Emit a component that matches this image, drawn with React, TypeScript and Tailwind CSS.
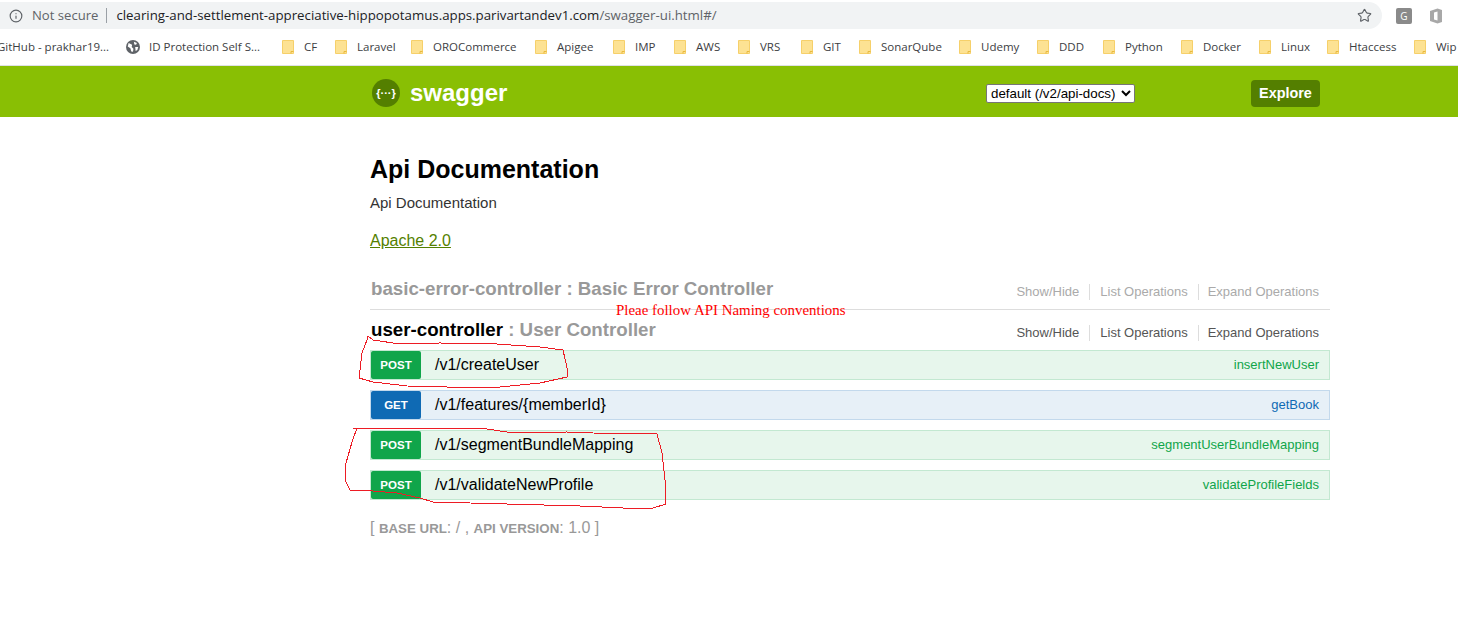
import { Info, Star } from "lucide-react";

const ui = "font-['Open_Sans','Noto_Sans',sans-serif]";

const bookmarks = [
  { label: "CF", w: "w-[53px]" },
  { label: "Laravel", w: "w-[76px]" },
  { label: "OROCommerce", w: "w-[124px]" },
  { label: "Apigee", w: "w-[78px]" },
  { label: "IMP", w: "w-[61px]" },
  { label: "AWS", w: "w-[64px]" },
  { label: "VRS", w: "w-[63px]" },
  { label: "GIT", w: "w-[58px]" },
  { label: "SonarQube", w: "w-[100px]" },
  { label: "Udemy", w: "w-[78px]" },
  { label: "DDD", w: "w-[66px]" },
  { label: "Python", w: "w-[78px]" },
  { label: "Docker", w: "w-[78px]" },
  { label: "Linux", w: "w-[68px]" },
  { label: "Htaccess", w: "w-[87px]" },
  { label: "Wip", w: "w-[60px]" },
];

const Folder = () => (
  <svg width="12" height="14" viewBox="0 0 12 14" className="shrink-0">
    <path d="M0.5 0.5H11.5V13.5H0.5Z" fill="#fde293" stroke="#f6d06a" />
    <path d="M9 13.5V11.5H11.5" fill="none" stroke="#e8b93e" />
  </svg>
);

const Globe = () => (
  <svg width="14" height="14" viewBox="0 0 16 16" className="shrink-0">
    <circle cx="8" cy="8" r="8" fill="#5f6368" />
    <path d="M3 3.5L7 5.5L6.5 8L8.5 10L8 13.5L6 13L5 9.5L2 7.5ZM9 2L12.5 3.5L11.5 5.5L9.5 5ZM10.5 8H14L13 11.5L11 12.5Z" fill="#fff" />
  </svg>
);

const ops = [
  { method: "POST", path: "/v1/createUser", nick: "insertNewUser" },
  { method: "GET", path: "/v1/features/{memberId}", nick: "getBook" },
  { method: "POST", path: "/v1/segmentBundleMapping", nick: "segmentUserBundleMapping" },
  { method: "POST", path: "/v1/validateNewProfile", nick: "validateProfileFields" },
];

const Links = ({ dim }: { dim?: boolean }) => (
  <div className={`flex items-center text-[13px] leading-[16px] ${dim ? "text-[#aaa] mt-[9px]" : "text-[#555] mt-[15px]"}`}>
    <span className="pr-[10px] border-r border-[#ddd]">Show/Hide</span>
    <span className="px-[10px] border-r border-[#ddd]">List Operations</span>
    <span className="pl-[9px] pr-[11px]">Expand Operations</span>
  </div>
);

export default function App() {
  return (
    <div className="relative w-[1458px] h-[623px] overflow-hidden bg-white font-['Liberation_Sans',Arial,sans-serif]">
      {/* browser chrome */}
      <div className={`h-[32px] flex items-center ${ui}`}>
        <div className="w-[1382px] h-[27px] -mt-[1px] bg-[#f1f3f4] rounded-r-[14px] flex items-center pl-[9px]">
          <Info size={14} strokeWidth={2} className="text-[#5f6368] shrink-0" />
          <span className="ml-[9px] text-[13.1px] text-[#5f6368] whitespace-nowrap">Not secure</span>
          <span className="ml-[8px] w-px h-[15px] bg-[#9aa0a6]" />
          <span className="ml-[9px] text-[13.28px] text-[#202124] whitespace-nowrap">
            clearing-and-settlement-appreciative-hippopotamus.apps.parivartandev1.com
            <span className="text-[#5f6368]">/swagger-ui.html#/</span>
          </span>
          <Star size={15} strokeWidth={1.8} className="text-[#5f6368] ml-auto mr-[10px]" />
        </div>
        <div className="ml-[14px] w-[16px] h-[16px] rounded-[2px] bg-[#8a8a8a] text-white text-[10px] flex items-center justify-center">
          G
        </div>
        <svg width="14" height="16" viewBox="0 0 14 16" className="ml-[17px]">
          <path d="M1 3L8.5 0.5L13 2V14L8.5 15.5L1 13Z" fill="#a8a8a8" />
          <path d="M5 4.5L8.5 3.5V12.5L5 11.5Z" fill="#fff" />
        </svg>
      </div>

      {/* bookmarks */}
      <div className={`h-[34px] pb-[3px] border-b border-[#dfe1e5] flex items-center -ml-[3px] text-[11.5px] text-[#3c4043] whitespace-nowrap ${ui}`}>
        <span className="w-[129px] shrink-0">GitHub - prakhar19...</span>
        <div className="w-[156px] shrink-0 flex items-center gap-[9px]">
          <Globe />
          <span>ID Protection Self S...</span>
        </div>
        {bookmarks.map((b) => (
          <div key={b.label} className={`${b.w} shrink-0 flex items-center gap-[10px]`}>
            <Folder />
            <span>{b.label}</span>
          </div>
        ))}
      </div>

      {/* swagger header */}
      <div className="h-[51px] pt-[3px] bg-[#89bf04] pl-[372px] flex items-center">
        <div className="w-[28px] h-[28px] rounded-full bg-[#547f00] text-white text-[11px] font-bold flex items-center justify-center">
          {"{···}"}
        </div>
        <span className="ml-[10px] w-[576px] text-white text-[24px] font-bold leading-none">swagger</span>
        <select className="w-[149px] h-[19px] bg-white border border-[#767676] rounded-[2px] text-[13.33px] text-black leading-none">
          <option>default (/v2/api-docs)</option>
        </select>
        <div className="ml-[116px] w-[69px] h-[27px] pt-px rounded-[4px] bg-[#547f00] text-white text-[14.4px] font-bold flex items-center justify-center">
          Explore
        </div>
      </div>

      {/* content */}
      <div className="ml-[370px] w-[960px]">
        <h1 className="mt-[35px] text-[25px] leading-[34px] font-bold text-black">Api Documentation</h1>
        <p className="mt-[8px] text-[15px] leading-[18px] text-[#333]">Api Documentation</p>
        <p className="mt-[20px] text-[16px] leading-[18px] text-[#547f00] underline">Apache 2.0</p>

        <div className="mt-[25px] h-[35px] border-b border-[#ddd] flex items-start justify-between">
          <span className="ml-[1px] mt-[2px] text-[18.72px] leading-[24px] font-bold text-[#999]">basic-error-controller : Basic Error Controller</span>
          <Links dim />
        </div>
        <div className="h-[40px] flex items-start justify-between">
          <span className="ml-[1px] mt-[8px] text-[18.72px] leading-[24px] font-bold text-[#999]">
            <span className="text-black">user-controller</span> : User Controller
          </span>
          <Links />
        </div>

        <div className="flex flex-col gap-[10px]">
          {ops.map((o) => {
            const post = o.method === "POST";
            return (
              <div
                key={o.path}
                className={`h-[30px] border flex items-center ${post ? "bg-[#e7f6ec] border-[#c3e8d1]" : "bg-[#e7f0f7] border-[#c3d9ec]"}`}
              >
                <span
                  className={`w-[50px] h-[28px] pt-[2px] rounded-[2px] text-white text-[11.5px] font-bold flex items-center justify-center ${post ? "bg-[#10a54a]" : "bg-[#0f6ab4]"}`}
                >
                  {o.method}
                </span>
                <span className="ml-[14px] text-[16px] text-black">{o.path}</span>
                <span className={`ml-auto mr-[10px] text-[13px] ${post ? "text-[#10a54a]" : "text-[#0f6ab4]"}`}>{o.nick}</span>
              </div>
            );
          })}
        </div>

        <div className="mt-[18px] text-[16px] leading-[20px] text-[#999] whitespace-nowrap">
          [ <span className="text-[13.3px] font-bold">BASE URL</span>: / , <span className="text-[13.3px] font-bold">API VERSION</span>: 1.0 ]
        </div>
      </div>

      {/* hand-drawn annotations over the page */}
      <span className="absolute left-[616px] top-[301px] text-[14.93px] leading-[18px] text-[#ff0000] font-['Liberation_Serif',serif] whitespace-nowrap">
        Pleae follow API Naming conventions
      </span>
      <svg className="absolute inset-0 pointer-events-none" width="1458" height="623" fill="none" stroke="#ed1c24" strokeWidth="1" shapeRendering="crispEdges">
        <polyline points="368,336 367,340 362,353 360,370 359,378 373,382 407,386 447,387 500,387 540,383 567,377 568,372 563,350 540,347 497,344 440,343 400,344 373,340 368,336" />
        <polyline points="353,428 383,428 487,429 513,433 567,432 593,433 657,434 662,453 665,480 666,504 653,508 623,508 580,506 507,504 433,502 420,498 397,493 373,491 350,490 345,480 346,463 352,442 357,428" />
      </svg>
    </div>
  );
}
